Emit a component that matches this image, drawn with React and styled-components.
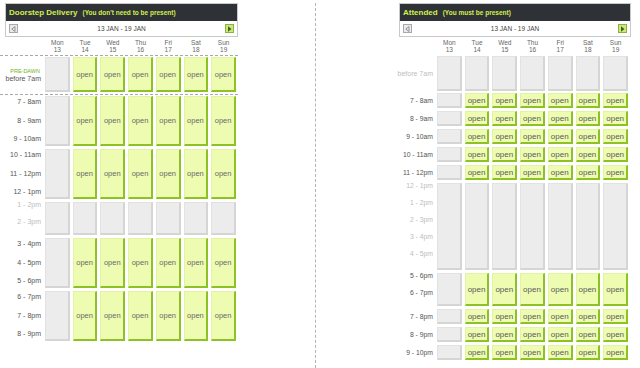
import React from "react";
import styled, { createGlobalStyle, css } from "styled-components";

const GlobalStyle = createGlobalStyle`
  html, body { margin: 0; padding: 0; background: #fff; }
  body { font-family: "Liberation Sans", Arial, sans-serif; }
`;

const DAYS = [["Mon", "13"], ["Tue", "14"], ["Wed", "15"], ["Thu", "16"], ["Fri", "17"], ["Sat", "18"], ["Sun", "19"]];

const Page = styled.div`
  display: flex;
  height: 368px;
  box-sizing: border-box;
  padding-top: 3px;
  overflow: hidden;
`;

const Panel = styled.section`
  flex: none;
  width: 238px;
  margin-left: ${(p) => p.$ml}px;
  display: flex;
  flex-direction: column;
`;

const Divider = styled.div`
  flex: none;
  width: 0;
  border-left: 1px dashed #b5b5b5;
  margin-left: 77px;
`;

const HeaderBox = styled.div`
  margin-left: ${(p) => p.$inset}px;
  width: ${(p) => p.$w}px;
  border: 1px solid #c9c9c9;
  box-sizing: border-box;
  background: #fff;
`;

const TitleBar = styled.div`
  height: 17px;
  background: #2e3136;
  display: flex;
  align-items: center;
  padding-left: 3px;
  gap: 5px;
  color: #d3ef4f;
  font-weight: bold;
`;

const Title = styled.span`
  font-size: 8px;
`;

const Subtitle = styled.span`
  font-size: 6.5px;
`;

const Nav = styled.div`
  height: 15px;
  display: flex;
  align-items: center;
  justify-content: space-between;
  padding: 0 3px;
`;

const NavBtn = styled.div`
  width: 9px;
  height: 9px;
  box-sizing: border-box;
  display: flex;
  align-items: center;
  justify-content: center;
  border: 1px solid ${(p) => (p.$active ? "#8ab33a" : "#a9a9a9")};
  background: ${(p) => (p.$active ? "#cde582" : "#ebebeb")};
`;

const DateText = styled.span`
  font-size: 6.5px;
  color: #444;
`;

const Row = styled.div`
  flex: none;
  display: grid;
  width: 236px;
  grid-template-columns: 42px repeat(7, 1fr);
  column-gap: 3px;
  height: ${(p) => p.$h}px;
  margin-top: ${(p) => p.$mt || 0}px;
`;

const DayHead = styled.div`
  text-align: center;
  font-size: 6.5px;
  line-height: 7px;
  color: #666;
  padding-top: 2px;
`;

const Rule = styled.div`
  flex: none;
  width: 238px;
  border-top: 1px dashed #a9a9a9;
  margin-top: ${(p) => p.$mt || 0}px;
`;

const Labels = styled.div`
  display: flex;
  flex-direction: column;
  align-items: flex-end;
  padding-right: 1px;
  ${(p) =>
    p.$mode === "spread" &&
    css`
      justify-content: space-between;
      padding-top: 1px;
      padding-bottom: 2px;
      line-height: 10px;
    `}
  ${(p) =>
    p.$mode === "top" &&
    css`
      justify-content: flex-start;
      line-height: 17px;
      margin-top: -6px;
    `}
  ${(p) =>
    p.$mode === "center" &&
    css`
      justify-content: center;
      line-height: 8px;
    `}
`;

const Label = styled.span`
  white-space: nowrap;
  font-size: ${(p) => p.$size || 7}px;
  color: ${(p) => (p.$dim ? "#bdbdbd" : "#555")};
`;

const PreDawn = styled.span`
  font-size: 5.5px;
  color: #76b31b;
  white-space: nowrap;
  margin-right: 1px;
`;

const Cell = styled.div`
  box-sizing: border-box;
  display: flex;
  align-items: center;
  justify-content: center;
  font-size: ${(p) => (p.$big ? 8 : 7.5)}px;
  color: ${(p) => (p.$big ? "#5a5a5a" : "#6a6a6a")};
  background: ${(p) => (p.$open ? "#edfcb0" : "#ececec")};
  border-style: solid;
  border-width: 1px 2px 2px 1px;
  border-color: ${(p) =>
    p.$open ? "#e2f4a4 #8cc224 #8cc224 #e2f4a4" : "#e2e2e2 #d5d5d5 #d5d5d5 #e2e2e2"};
`;

const LeftArrow = () => (
  <svg width="5" height="6" viewBox="0 0 5 6">
    <polygon points="4,0.5 4,5.5 0.8,3" fill="none" stroke="#8a8a8a" strokeWidth="0.9" />
  </svg>
);

const RightArrow = () => (
  <svg width="5" height="6" viewBox="0 0 5 6">
    <polygon points="1,0.3 1,5.7 4.5,3" fill="#3f6410" />
  </svg>
);

function Header({ title, sub, inset, w }) {
  return (
    <HeaderBox $inset={inset} $w={w}>
      <TitleBar>
        <Title>{title}</Title>
        <Subtitle>{sub}</Subtitle>
      </TitleBar>
      <Nav>
        <NavBtn>
          <LeftArrow />
        </NavBtn>
        <DateText>13 JAN - 19 JAN</DateText>
        <NavBtn $active>
          <RightArrow />
        </NavBtn>
      </Nav>
    </HeaderBox>
  );
}

function DayHeaders() {
  return (
    <Row $h={18}>
      <div />
      {DAYS.map(([d, n]) => (
        <DayHead key={d}>
          {d}
          <br />
          {n}
        </DayHead>
      ))}
    </Row>
  );
}

function Cells({ open, big }) {
  return DAYS.map(([d], i) => {
    const isOpen = open && i > 0;
    return (
      <Cell key={d} $open={isOpen} $big={big}>
        {isOpen ? "open" : ""}
      </Cell>
    );
  });
}

const leftBlocks = [
  { hours: 3, open: true, labels: ["7 - 8am", "8 - 9am", "9 - 10am"] },
  { hours: 3, open: true, labels: ["10 - 11am", "11 - 12pm", "12 - 1pm"] },
  { hours: 2, open: false, labels: ["1 - 2pm", "2 - 3pm"] },
  { hours: 3, open: true, labels: ["3 - 4pm", "4 - 5pm", "5 - 6pm"] },
  { hours: 3, open: true, labels: ["6 - 7pm", "7 - 8pm", "8 - 9pm"] },
];

const rightBlocks = [
  { hours: 1, open: true, labels: ["7 - 8am"] },
  { hours: 1, open: true, labels: ["8 - 9am"] },
  { hours: 1, open: true, labels: ["9 - 10am"] },
  { hours: 1, open: true, labels: ["10 - 11am"] },
  { hours: 1, open: true, labels: ["11 - 12pm"] },
  { hours: 5, open: false, labels: ["12 - 1pm", "1 - 2pm", "2 - 3pm", "3 - 4pm", "4 - 5pm"] },
  { hours: 2, open: true, labels: ["5 - 6pm", "6 - 7pm"] },
  { hours: 1, open: true, labels: ["7 - 8pm"] },
  { hours: 1, open: true, labels: ["8 - 9pm"] },
  { hours: 1, open: true, labels: ["9 - 10pm"] },
];

function DoorstepPanel() {
  return (
    <Panel $ml={0}>
      <Header title="Doorstep Delivery" sub="(You don't need to be present)" inset={5} w={233} />
      <DayHeaders />
      <Rule />
      <Row $h={35} $mt={1}>
        <Labels $mode="center">
          <PreDawn>PRE-DAWN</PreDawn>
          <Label>before 7am</Label>
        </Labels>
        <Cells open />
      </Row>
      <Rule $mt={2} />
      {leftBlocks.map((b, i) => (
        <Row key={i} $h={b.hours * 17 - 1} $mt={i === 0 ? 1 : 3}>
          <Labels $mode={b.open ? "spread" : "top"}>
            {b.labels.map((l) => (
              <Label key={l} $dim={!b.open}>
                {l}
              </Label>
            ))}
          </Labels>
          <Cells open={b.open} />
        </Row>
      ))}
    </Panel>
  );
}

function AttendedPanel() {
  return (
    <Panel $ml={76}>
      <Header title="Attended" sub="(You must be present)" inset={7} w={232} />
      <DayHeaders />
      <Row $h={35} $mt={1}>
        <Labels $mode="center">
          <Label $dim>before 7am</Label>
        </Labels>
        <Cells open={false} big />
      </Row>
      {rightBlocks.map((b, i) => (
        <Row key={i} $h={b.hours * 18 - 3} $mt={i === 0 ? 2 : 3}>
          <Labels $mode={b.hours === 1 ? "center" : "top"}>
            {b.labels.map((l) => (
              <Label key={l} $dim={!b.open} $size={6.8}>
                {l}
              </Label>
            ))}
          </Labels>
          <Cells open={b.open} big />
        </Row>
      ))}
    </Panel>
  );
}

export default function App() {
  return (
    <>
      <GlobalStyle />
      <Page>
        <DoorstepPanel />
        <Divider />
        <AttendedPanel />
      </Page>
    </>
  );
}
